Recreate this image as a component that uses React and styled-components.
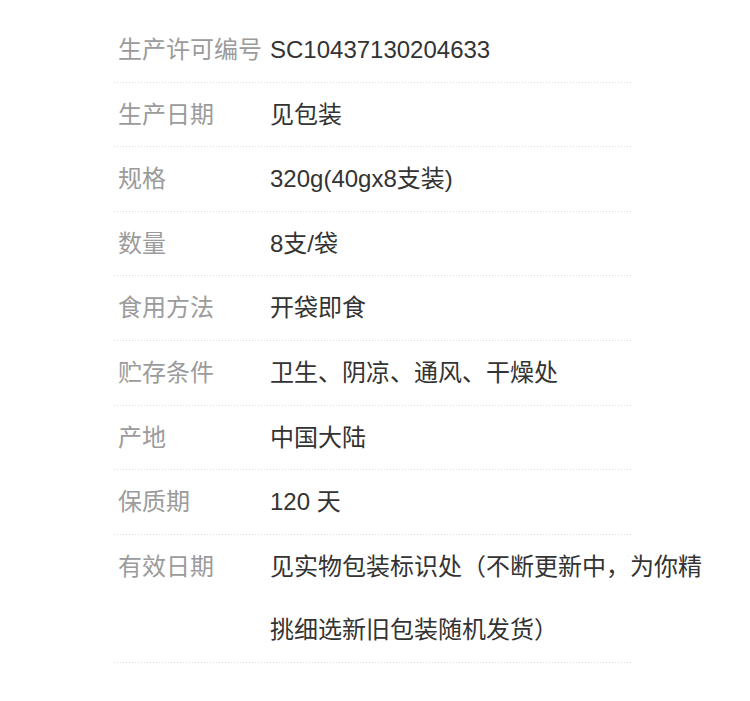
import React from "react";
import styled, { createGlobalStyle } from "styled-components";

const GlobalStyle = createGlobalStyle`
  html, body {
    margin: 0;
    padding: 0;
    background: #ffffff;
  }
  body {
    font-family: "Liberation Sans", "Noto Sans CJK SC", sans-serif;
    -webkit-font-smoothing: antialiased;
  }
`;

const Page = styled.div`
  width: 750px;
  min-height: 701px;
  box-sizing: border-box;
  padding: 18px 0 0 114px;
  background: #ffffff;
`;

const List = styled.div`
  display: flex;
  flex-direction: column;
`;

const Row = styled.div`
  display: grid;
  grid-template-columns: 152px 440px;
  padding-left: 4px;
  font-size: 24px;
  line-height: 63.6px;
`;

const Label = styled.div`
  color: #9b9b9b;
  white-space: nowrap;
`;

const Value = styled.div`
  color: #333333;
`;

/* dotted rule, 3px period like the original */
const Divider = styled.div`
  width: 518px;
  height: 1px;
  background-image: linear-gradient(to right, #dcdcdc 50%, transparent 50%);
  background-size: 3px 1px;
  background-repeat: repeat-x;
`;

const specs = [
  { label: "生产许可编号", value: "SC10437130204633" },
  { label: "生产日期", value: "见包装" },
  { label: "规格", value: "320g(40gx8支装)" },
  { label: "数量", value: "8支/袋" },
  { label: "食用方法", value: "开袋即食" },
  { label: "贮存条件", value: "卫生、阴凉、通风、干燥处" },
  { label: "产地", value: "中国大陆" },
  { label: "保质期", value: "120 天" },
  {
    label: "有效日期",
    value: "见实物包装标识处（不断更新中，为你精挑细选新旧包装随机发货）"
  }
];

export default function App() {
  return (
    <>
      <GlobalStyle />
      <Page>
        <List>
          {specs.map(item => (
            <React.Fragment key={item.label}>
              <Row>
                <Label>{item.label}</Label>
                <Value>{item.value}</Value>
              </Row>
              <Divider />
            </React.Fragment>
          ))}
        </List>
      </Page>
    </>
  );
}
